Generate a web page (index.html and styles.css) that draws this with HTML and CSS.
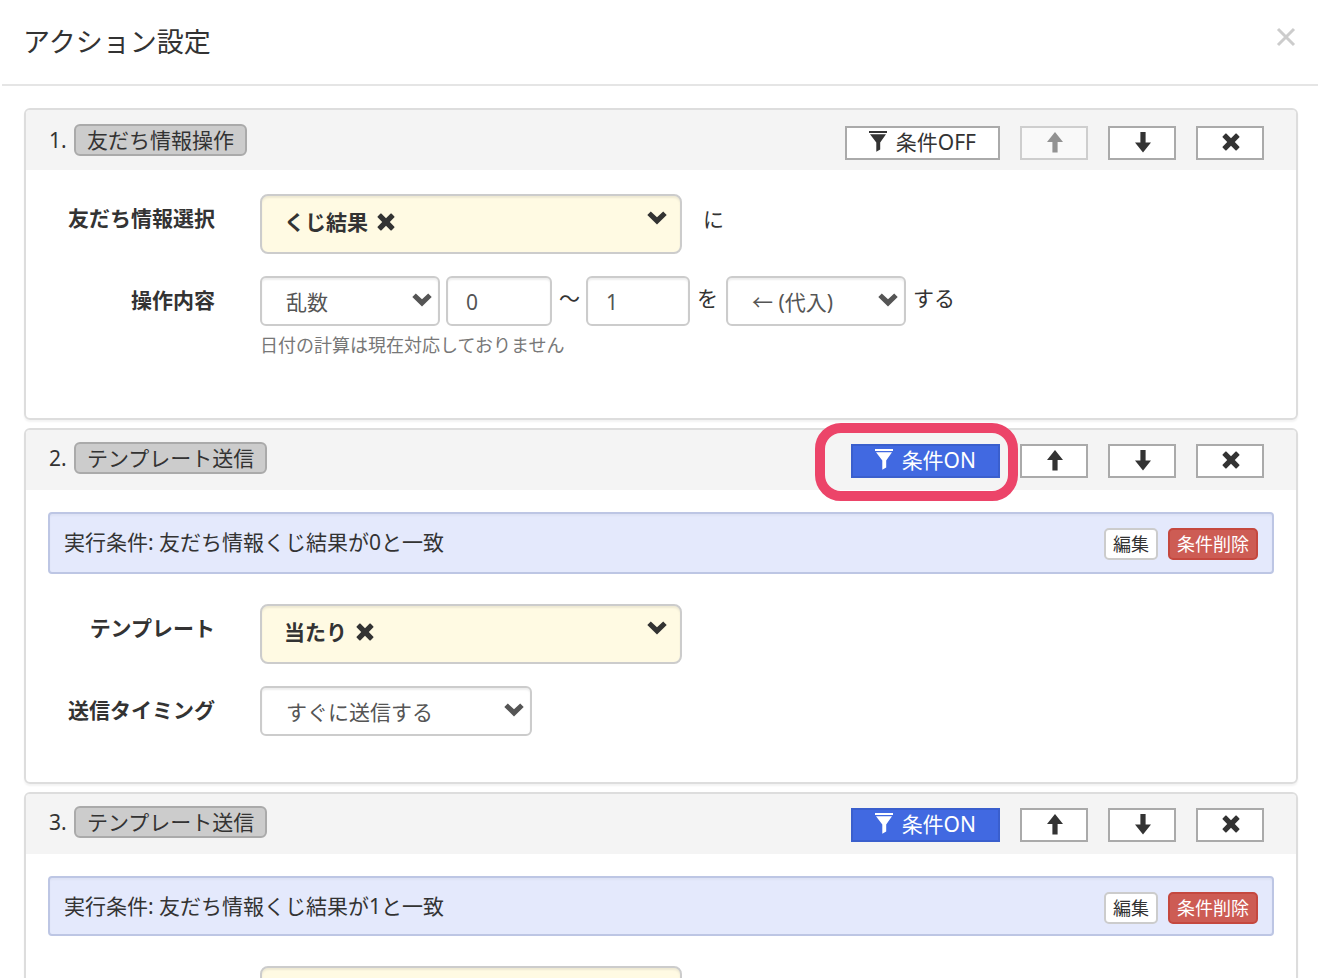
FILE: index.html
```html
<!DOCTYPE html>
<html lang="ja">
<head>
<meta charset="utf-8">
<title>アクション設定</title>
<link rel="stylesheet" href="styles.css">
</head>
<body>
<svg class="sprite" aria-hidden="true">
  <symbol id="i-filter" viewBox="0 0 18 21"><path d="M0 0H18V2H0ZM1 3.2H17L11.2 11.5V18.5L7.3 20.8V11.5Z"/></symbol>
  <symbol id="i-up" viewBox="0 0 16 21"><path d="M8 0L16 10H10.6V20.5H5.4V10H0Z"/></symbol>
  <symbol id="i-down" viewBox="0 0 16 21"><path d="M5.4 0H10.6V10.5H16L8 20.5L0 10.5H5.4Z"/></symbol>
  <symbol id="i-x" viewBox="0 0 18 18"><path d="M4.3 .6L9 5.2L13.7 .6Q14.1 .3 14.5 .6L17.4 3.5Q17.7 3.9 17.4 4.3L12.8 9L17.4 13.7Q17.7 14.1 17.4 14.5L14.5 17.4Q14.1 17.7 13.7 17.4L9 12.8L4.3 17.4Q3.9 17.7 3.5 17.4L.6 14.5Q.3 14.1 .6 13.7L5.2 9L.6 4.3Q.3 3.9 .6 3.5L3.5 .6Q3.9 .3 4.3 .6Z"/></symbol>
  <symbol id="i-chev" viewBox="0 0 20 14"><path d="M3.8 .5L10 6.3L16.2 .5L19.7 3.9L10 13.6L.3 3.9Z"/></symbol>
</svg>
<main class="modal">
  <header class="modal-head">
    <h1 class="modal-title">アクション設定</h1>
    <button class="close" type="button" aria-label="閉じる"><svg viewBox="0 0 20 20"><path d="M2 2L18 18M18 2L2 18"/></svg></button>
  </header>
  <div class="cards">
    <section class="card">
      <div class="card-head">
        <span class="num">1.</span><span class="tag">友だち情報操作</span>
        <div class="tools">
          <button class="tool cond" type="button"><svg class="filter"><use href="#i-filter"/></svg>条件OFF</button>
          <button class="tool" type="button" aria-label="上へ" disabled><svg class="arrow"><use href="#i-up"/></svg></button>
          <button class="tool" type="button" aria-label="下へ"><svg class="arrow"><use href="#i-down"/></svg></button>
          <button class="tool" type="button" aria-label="削除"><svg class="x"><use href="#i-x"/></svg></button>
        </div>
      </div>
      <div class="card-body">
        <div class="row">
          <span class="label">友だち情報選択</span>
          <div class="picker" role="group" aria-label="友だち情報選択">
            <span>くじ結果</span>
            <button class="bare" type="button" aria-label="解除"><svg class="x"><use href="#i-x"/></svg></button>
            <button class="bare toggle" type="button" aria-label="開く"><svg class="chev"><use href="#i-chev"/></svg></button>
          </div>
          <span class="word after">に</span>
        </div>
        <div class="row">
          <label class="label" for="op">操作内容</label>
          <div>
            <div class="controls">
              <span class="select"><select id="op"><option>乱数</option></select><svg class="chev"><use href="#i-chev"/></svg></span>
              <input class="number from" type="text" value="0" aria-label="最小値">
              <span class="word">〜</span>
              <input class="number" type="text" value="1" aria-label="最大値">
              <span class="word particle">を</span>
              <span class="select"><select aria-label="代入方法"><option>← (代入)</option></select><svg class="chev"><use href="#i-chev"/></svg></span>
              <span class="word">する</span>
            </div>
            <p class="help">日付の計算は現在対応しておりません</p>
          </div>
        </div>
      </div>
    </section>

    <section class="card">
      <div class="card-head">
        <span class="num">2.</span><span class="tag">テンプレート送信</span>
        <div class="tools">
          <span class="marked"><button class="tool cond on" type="button"><svg class="filter"><use href="#i-filter"/></svg>条件ON</button><span class="ring"></span></span>
          <button class="tool" type="button" aria-label="上へ"><svg class="arrow"><use href="#i-up"/></svg></button>
          <button class="tool" type="button" aria-label="下へ"><svg class="arrow"><use href="#i-down"/></svg></button>
          <button class="tool" type="button" aria-label="削除"><svg class="x"><use href="#i-x"/></svg></button>
        </div>
      </div>
      <div class="card-body">
        <div class="panel">
          <span class="panel-text">実行条件: 友だち情報くじ結果が0と一致</span>
          <button class="small" type="button">編集</button>
          <button class="small danger" type="button">条件削除</button>
        </div>
        <div class="row">
          <span class="label">テンプレート</span>
          <div class="picker" role="group" aria-label="テンプレート">
            <span>当たり</span>
            <button class="bare" type="button" aria-label="解除"><svg class="x"><use href="#i-x"/></svg></button>
            <button class="bare toggle" type="button" aria-label="開く"><svg class="chev"><use href="#i-chev"/></svg></button>
          </div>
        </div>
        <div class="row">
          <label class="label" for="timing">送信タイミング</label>
          <span class="select wide"><select id="timing"><option>すぐに送信する</option></select><svg class="chev"><use href="#i-chev"/></svg></span>
        </div>
      </div>
    </section>

    <section class="card">
      <div class="card-head">
        <span class="num">3.</span><span class="tag">テンプレート送信</span>
        <div class="tools">
          <button class="tool cond on" type="button"><svg class="filter"><use href="#i-filter"/></svg>条件ON</button>
          <button class="tool" type="button" aria-label="上へ"><svg class="arrow"><use href="#i-up"/></svg></button>
          <button class="tool" type="button" aria-label="下へ"><svg class="arrow"><use href="#i-down"/></svg></button>
          <button class="tool" type="button" aria-label="削除"><svg class="x"><use href="#i-x"/></svg></button>
        </div>
      </div>
      <div class="card-body">
        <div class="panel compact">
          <span class="panel-text">実行条件: 友だち情報くじ結果が1と一致</span>
          <button class="small" type="button">編集</button>
          <button class="small danger" type="button">条件削除</button>
        </div>
        <div class="row">
          <span class="label"></span>
          <div class="picker"></div>
        </div>
      </div>
    </section>
  </div>
</main>
</body>
</html>
```
FILE: styles.css
```css
* { box-sizing: border-box; }
html, body { height: 100%; }
body {
  margin: 0;
  overflow: hidden;
  background: #fff;
  color: #333;
  font: 21px/30px "Noto Sans", "Noto Sans CJK JP", sans-serif;
}
button, input, select { font: inherit; color: inherit; margin: 0; }
svg { display: block; fill: currentColor; flex: none; }
.sprite { position: absolute; width: 0; height: 0; }

.modal { height: 100%; margin-left: 2px; overflow: hidden; }
.modal-head {
  display: flex;
  justify-content: space-between;
  align-items: flex-start;
  padding: 22px 22px 22px 21px;
  border-bottom: 2px solid #e5e5e5;
}
.modal-title { margin: 0; font-size: 27px; line-height: 40px; font-weight: 400; }
.close { padding: 5px 0; border: 0; background: none; color: #ccc; }
.close svg { width: 20px; height: 20px; stroke: currentColor; stroke-width: 3; }

.cards { display: flex; flex-direction: column; gap: 8px; padding: 22px 20px 22px 22px; }
.card {
  border: 2px solid #ddd;
  border-radius: 6px;
  box-shadow: 0 2px 2px rgba(0, 0, 0, .05);
}
.card-head {
  display: flex;
  align-items: flex-start;
  height: 60px;
  padding: 12px 32px 0 23px;
  background: #f4f4f4;
  border-radius: 4px 4px 0 0;
}
.card:first-child .card-head { padding-top: 14px; }
.num { width: 25px; line-height: 32px; }
.tag {
  padding: 0 11px;
  border: 2px solid #aaa;
  border-radius: 6px;
  background: #ccc;
  line-height: 28px;
}
.tools { display: flex; gap: 20px; margin: 2px 0 0 auto; }
.tool {
  display: flex;
  justify-content: center;
  width: 68px;
  height: 34px;
  padding: 4px 0 0 1px;
  border: 2px solid #aaa;
  background: #fff;
  line-height: 28px;
}
.tool:disabled { opacity: .5; }
.tool.cond { width: auto; padding: 0 22px; gap: 9px; }
.tool.on { background: #4169e1; border-color: #3a5fcd; color: #fff; }
.arrow { width: 16px; height: 21px; }
.filter { width: 18px; height: 21px; margin-top: 3px; }
.x { width: 18px; height: 18px; }
.tool .x { margin-top: 1px; }
.marked { position: relative; }
.ring {
  position: absolute;
  inset: -21px -18px -23px -36px;
  border: 10px solid #ec4469;
  border-radius: 26px;
  pointer-events: none;
}

.card-body { display: flex; flex-direction: column; gap: 22px; padding: 24px 22px 46px; }
.row { display: flex; align-items: flex-start; }
.label {
  width: 167px;
  margin-right: 45px;
  padding-top: 9px;
  text-align: right;
  font-weight: 700;
}
.picker {
  display: flex;
  align-items: flex-start;
  gap: 9px;
  width: 422px;
  height: 60px;
  padding: 11px 13px 0 22px;
  border: 2px solid #ccc;
  border-radius: 8px;
  background: #fffae3;
  box-shadow: inset 0 2px 2px rgba(0, 0, 0, .07);
  font-weight: 700;
}
.bare { padding: 6px 0 0; border: 0; background: none; }
.bare.toggle { margin-left: auto; padding-top: 4px; }
.chev { width: 20px; height: 14px; }
.word { padding: 7px 6px 0 7px; }
.word.particle { padding: 7px 8px 0 7px; }
.word.after { padding: 10px 0 0 21px; }
.controls { display: flex; }
.select { position: relative; width: 180px; color: #555; }
.select.wide { width: 272px; }
.select select, .number {
  appearance: none;
  width: 100%;
  height: 50px;
  padding: 2px 24px 0;
  border: 2px solid #ccc;
  border-radius: 6px;
  background: #fff;
  color: #555;
  box-shadow: inset 0 2px 2px rgba(0, 0, 0, .07);
}
.select .chev { position: absolute; right: 8px; top: 17px; pointer-events: none; }
.number { width: 104px; padding: 2px 18px 0; }
.number.from { width: 106px; margin-left: 6px; }
.help { margin: 6px 0 13px; font-size: 18px; line-height: 27px; color: #777; }

.panel {
  display: flex;
  align-items: flex-start;
  gap: 10px;
  height: 62px;
  margin: -2px 0 8px;
  padding: 14px;
  border: 2px solid #bdc6e4;
  border-radius: 4px;
  background: #e4e9fc;
  box-shadow: inset 0 2px 2px rgba(0, 0, 0, .03);
}
.panel.compact { height: 60px; }
.panel-text { margin-right: auto; line-height: 28px; }
.small {
  height: 32px;
  padding: 0 7px;
  border: 2px solid #ccc;
  border-radius: 5px;
  background: #fff;
  font-size: 18px;
  line-height: 28px;
}
.small.danger { background: #cd5c54; border-color: #c5483f; color: #fff; }
```
